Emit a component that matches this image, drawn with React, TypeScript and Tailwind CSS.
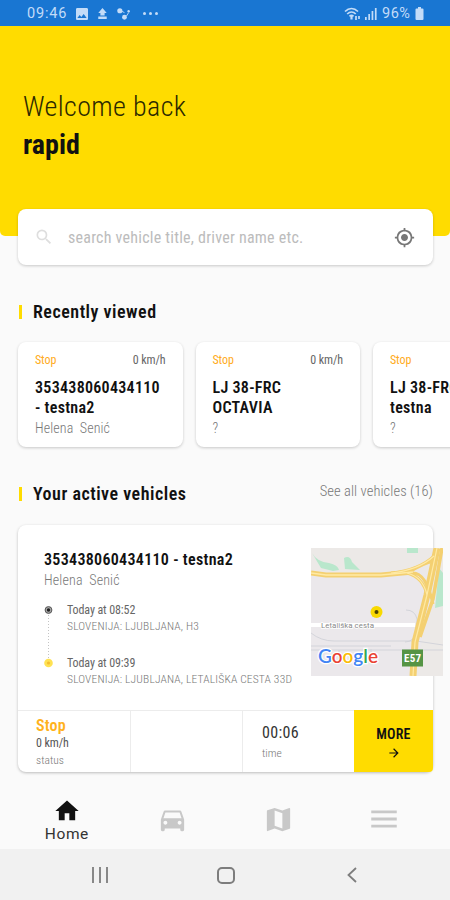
import type { ReactNode } from "react";
import {
  MdArrowForward,
  MdDirectionsCar,
  MdHome,
  MdImage,
  MdMap,
  MdMenu,
  MdMyLocation,
  MdSearch,
} from "react-icons/md";

const recent = [
  { title: ["353438060434110", "- testna2"], driver: "Helena  Senić" },
  { title: ["LJ 38-FRC", "OCTAVIA"], driver: "?" },
  { title: ["LJ 38-FRC", "testna"], driver: "?" },
];

const SectionTitle = ({ children }: { children: ReactNode }) => (
  <div className="flex items-center">
    <span className="mr-[11px] ml-px h-[14px] w-[3px] bg-[#ffdc00]"></span>
    <h2 className="text-[18px] leading-6 font-semibold tracking-[0.5px] text-[#111]">{children}</h2>
  </div>
);

const StatusBar = () => (
  <div className="flex h-[26px] items-center bg-[#1976d2] pt-px pr-[26px] pl-[27px] font-['Roboto',sans-serif] text-[14.5px] text-[#c3dcf8]">
    <span className="w-[47px] tracking-[0.8px]">09:46</span>
    <MdImage className="size-4" />
    {/* upload */}
    <svg className="ml-[7px] h-[11px] w-[11px]" viewBox="0 0 12 13" fill="currentColor">
      <path d="M6 0l5 6H8.5v3h-5V6H1zM1 10h10v3H1z" />
    </svg>
    {/* connected dots */}
    <svg className="ml-[9px] h-3 w-[14px]" viewBox="0 0 15 13" fill="currentColor">
      <circle cx="3" cy="3" r="2.8" />
      <circle cx="8" cy="10" r="2.6" />
      <circle cx="12.5" cy="3.5" r="1.3" />
      <path d="M4 3l4 2M10 9l2.5-4" stroke="currentColor" fill="none" />
    </svg>
    <span className="ml-3 flex gap-[3.5px]">
      <i className="size-[2.5px] rounded-full bg-current"></i>
      <i className="size-[2.5px] rounded-full bg-current"></i>
      <i className="size-[2.5px] rounded-full bg-current"></i>
    </span>
    <div className="ml-auto flex items-center">
      <svg className="h-[14px] w-[18px]" viewBox="0 0 18 14" fill="none" stroke="currentColor" strokeWidth="1.7">
        <path d="M1 4.5c4-4 9-4 13 0M3.2 7c2.7-2.7 6-2.7 8.5 0M5.5 9.3c1.3-1.3 2.7-1.3 4 0" />
        <path d="M7.5 9v3.5" strokeWidth="2.2" />
        <path d="M12 9v4M15 9v3" strokeWidth="1.7" />
      </svg>
      <svg className="ml-[3px] h-3 w-3" viewBox="0 0 12 12" fill="currentColor">
        <path d="M0 9h1.7v3H0zM3.3 6H5v6H3.3zM6.6 3h1.7v9H6.6zM9.9 0h1.7v12H9.9z" />
      </svg>
      <span className="ml-[5px] w-[33px] tracking-[0.5px]">96%</span>
      <svg className="h-[13px] w-[9px]" viewBox="0 0 8 13" fill="currentColor">
        <path d="M2.5 0h3v1.5H7a1 1 0 0 1 1 1V12a1 1 0 0 1-1 1H1a1 1 0 0 1-1-1V2.5a1 1 0 0 1 1-1h1.5z" />
      </svg>
    </div>
  </div>
);

const MapPreview = () => (
  <svg className="block h-[128px] w-[132px]" viewBox="0 0 132 128">
    <rect width="132" height="128" fill="#ece9e7" />
    <path d="M0 28l90-1 20-10 12 20-18 91H0z" fill="#ebe8eb" />
    <path
      d="M1 5q5 9 17 10 9 2 10 7l-6 1-12-3zM33 10q6-3 8 4l8 8-15-1zM96 0h11v5H96zM128 20l4 5v33l-8 2z"
      fill="#b9e7cc"
    />
    <path d="M0 77h104" stroke="#fff" strokeWidth="4" />
    <path
      d="M0 85q10 8 23 8h82l27 4M0 102h132M0 98h80M95 62q9 0 11 9v12q-3 11-12 11M112 79q-5 6-6 14M28 102v12M60 101v10"
      fill="none"
      stroke="#d3d4da"
    />
    <g fill="none" stroke="#f4d071" strokeLinejoin="round">
      <path d="M0 25l15 2h55l32-3" strokeWidth="5" />
      <path d="M80 25q28-3 43-17M96 25q16 4 20 22M101 25q14-1 21 31M123 13q-11 2-26 12" strokeWidth="3" />
      <path d="M126 0l-10 47-12 47-2 34" strokeWidth="7" />
      <path d="M131 0l-9 51-13 38" strokeWidth="3.5" />
    </g>
    <g fill="none" stroke="#ffeaa5">
      <path d="M0 25l15 2h55l32-3" strokeWidth="1.5" />
      <path d="M126 0l-10 47-12 47-2 34M80 25q28-3 43-17M96 25q16 4 20 22" strokeWidth="1.2" />
    </g>
    <circle cx="65.5" cy="64" r="6" fill="#f8d900" />
    <circle cx="65.5" cy="64" r="2" fill="#4b4300" />
    <text
      x="10"
      y="80"
      fontSize="8"
      textLength="53"
      fontFamily="Roboto, sans-serif"
      fill="#8a8a8a"
      stroke="#fff"
      strokeWidth="1.5"
      paintOrder="stroke"
    >
      Letališka cesta
    </text>
    <text
      x="7"
      y="115"
      fontSize="19"
      textLength="60"
      fontFamily="Lato, sans-serif"
      fontWeight="600"
      stroke="#fff"
      strokeWidth="2.5"
      paintOrder="stroke"
    >
      <tspan fill="#4285f4">G</tspan>
      <tspan fill="#ea4335">o</tspan>
      <tspan fill="#fbbc05">o</tspan>
      <tspan fill="#4285f4">g</tspan>
      <tspan fill="#34a853">l</tspan>
      <tspan fill="#ea4335">e</tspan>
    </text>
    <rect x="91" y="101.5" width="21" height="17" fill="#559444" />
    <text x="93" y="114" fontSize="11" fontWeight="700" textLength="17" fill="#fff">
      E57
    </text>
  </svg>
);

const Stop = ({ time, place }: { time: string; place: string }) => (
  <div className="h-[53px]">
    <p className="text-[12px] leading-4 tracking-[-0.1px] text-[#666]">{time}</p>
    <p className="text-[11.5px] leading-4 font-light tracking-[0.18px] text-[#777]">{place}</p>
  </div>
);

const App = () => {
  return (
    <div className="h-[900px] w-[450px] overflow-hidden bg-[#fafafa] font-['Roboto_Condensed','Roboto',sans-serif] whitespace-pre text-[#111]">
      <StatusBar />

      {/* Welcome banner */}
      <header className="h-[210px] rounded-b-[5px] bg-[#ffdc00] pt-[62px] pl-[23px]">
        <p className="text-[28px] leading-[38px] font-light tracking-[0.4px] text-[#2c2900]">Welcome back</p>
        <p className="text-[28px] leading-[38px] font-bold">rapid</p>
      </header>

      {/* Search */}
      <div className="mt-[-27px] mr-[17px] ml-[18px] flex h-14 items-center rounded-lg bg-white pr-[18px] pl-4 shadow-[0_1px_3px_rgba(0,0,0,0.2)]">
        <MdSearch className="size-5 text-[#dedede]" />
        <span className="mt-[2px] ml-[14px] text-[16px] tracking-[0.23px] text-[#bcbcbc]">
          search vehicle title, driver name etc.
        </span>
        <MdMyLocation className="ml-auto size-[21px] text-[#777]" />
      </div>

      {/* Recently viewed */}
      <section className="mt-[35px] pl-[18px]">
        <SectionTitle>Recently viewed</SectionTitle>
        <div className="mt-[18px] flex gap-[13px]">
          {recent.map((v, i) => (
            <div
              key={i}
              className="h-[105px] w-[164.5px] shrink-0 rounded-lg bg-white px-[17px] pt-[10px] shadow-[0_1px_3px_rgba(0,0,0,0.2)]"
            >
              <div className="flex justify-between text-[12px] leading-4 tracking-[-0.1px]">
                <span className="text-[#ffab21]">Stop</span>
                <span className="text-[#666]">0 km/h</span>
              </div>
              <h3 className="mt-[10px] text-[16px] leading-5 font-semibold tracking-[0.28px]">
                {v.title[0]}
                <br />
                {v.title[1]}
              </h3>
              <p className="text-[14px] leading-5 font-light tracking-[0.1px] text-[#777]">{v.driver}</p>
            </div>
          ))}
        </div>
      </section>

      {/* Active vehicles */}
      <section className="mt-[35px] pr-[17px] pl-[18px]">
        <div className="flex justify-between">
          <SectionTitle>Your active vehicles</SectionTitle>
          <span className="pt-px text-[14.5px] leading-[18px] font-light tracking-[0.08px] text-[#777]">
            See all vehicles (16)
          </span>
        </div>
        <div className="mt-[19px] h-[247px] rounded-lg bg-white shadow-[0_1px_3px_rgba(0,0,0,0.25)]">
          <div className="flex h-[185px]">
            <div className="w-[293px] shrink-0 pt-[25px] pl-[26px]">
              <h3 className="text-[16px] leading-5 font-semibold tracking-[0.3px]">353438060434110 - testna2</h3>
              <p className="text-[14px] leading-5 font-light tracking-[0.15px] text-[#777]">Helena  Senić</p>
              <div className="mt-3 flex">
                <svg className="mt-[3px] mr-[13px] h-[64px] w-[10px]" viewBox="0 0 10 64">
                  <path d="M4.5 10v44" stroke="#c4c4c4" strokeDasharray="1 2" />
                  <circle cx="4.5" cy="5" r="3.4" fill="#aaa" stroke="#555" />
                  <circle cx="4.5" cy="5" r="1.7" fill="#222" />
                  <circle cx="4.5" cy="58" r="4.3" fill="#ffe252" />
                  <circle cx="4.5" cy="58" r="1.6" fill="#f5bd2f" />
                </svg>
                <div>
                  <Stop time="Today at 08:52" place="SLOVENIJA: LJUBLJANA, H3" />
                  <Stop time="Today at 09:39" place="SLOVENIJA: LJUBLJANA, LETALIŠKA CESTA 33D" />
                </div>
              </div>
            </div>
            <div className="shrink-0 pt-[23px]">
              <MapPreview />
            </div>
          </div>
          <div className="flex h-[62px]">
            <div className="w-[113px] border-t border-r border-[#ececec] pt-[6px] pl-[18px]">
              <p className="text-[16px] leading-[18px] font-semibold tracking-[0.2px] text-[#ffb21c]">Stop</p>
              <p className="text-[12px] leading-4 tracking-[-0.1px] text-[#555]">0 km/h</p>
              <p className="mt-px text-[11.5px] leading-4 font-light text-[#777]">status</p>
            </div>
            <div className="w-[112px] border-t border-r border-[#ececec]"></div>
            <div className="w-[111px] border-t border-[#ececec] pt-3 pl-[19px]">
              <p className="text-[16px] leading-5 tracking-[0.3px] text-[#333]">00:06</p>
              <p className="text-[11.5px] leading-5 font-light text-[#777]">time</p>
            </div>
            <div className="flex flex-1 flex-col items-center rounded-br bg-[#ffdc00] pt-[15px]">
              <span className="text-[14px] leading-[18px] font-semibold tracking-[0.2px]">MORE</span>
              <MdArrowForward className="mt-[3px] size-[14px]" />
            </div>
          </div>
        </div>
      </section>

      {/* Tabs */}
      <nav className="mt-[15px] flex h-[62px] pr-[13px] pl-[14px] font-['Roboto',sans-serif] text-[#c8c8c8]">
        <div className="flex flex-1 flex-col items-center pt-[10px]">
          <MdHome className="size-[28px] text-[#111]" />
          <span className="-mt-px text-[15.5px] leading-5 tracking-[0.6px] text-[#333]">Home</span>
        </div>
        <div className="flex flex-1 justify-center pt-[17px]">
          <MdDirectionsCar className="size-[31px]" />
        </div>
        <div className="flex flex-1 justify-center pt-[17px]">
          <MdMap className="size-[31px]" />
        </div>
        <div className="flex flex-1 justify-center pt-[15px]">
          <MdMenu className="size-[34px]" />
        </div>
      </nav>

      {/* System buttons */}
      <div className="flex h-[51px] items-center justify-between bg-[#f1f1f1] pt-px pr-[93px] pl-[91px] text-[#7d7d7d]">
        <svg className="h-4 w-[18px]" viewBox="0 0 18 16" stroke="currentColor" strokeWidth="1.8">
          <path d="M2 0v16M9 0v16M16 0v16" />
        </svg>
        <span className="ml-[-5px] h-[17px] w-[18px] rounded-[5px] border-2 border-[#7d7d7d]"></span>
        <svg className="h-4 w-[10px]" viewBox="0 0 10 16" fill="none" stroke="currentColor" strokeWidth="1.8">
          <path d="M9 1L1.5 8 9 15" />
        </svg>
      </div>
    </div>
  );
};

export default App;
